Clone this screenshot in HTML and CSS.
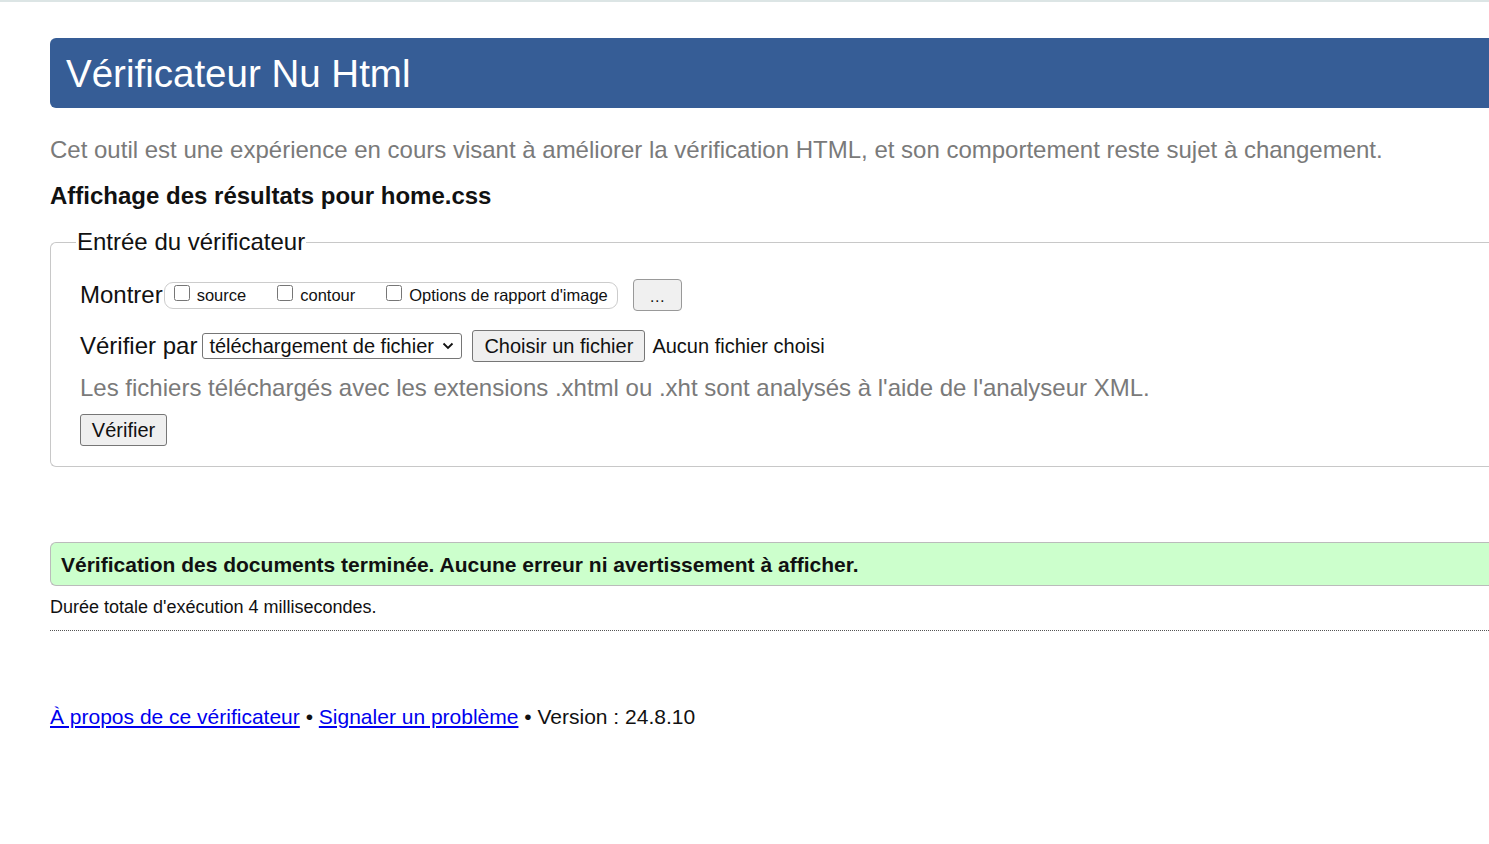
FILE: index.html
```html
<!DOCTYPE html>
<html lang="fr">
<head>
<meta charset="utf-8">
<title>Vérificateur Nu Html</title>
<link rel="stylesheet" href="styles.css">
</head>
<body>
<div class="topline"></div>
<div class="page">
  <h1 class="banner">Vérificateur Nu Html</h1>
  <p class="intro">Cet outil est une expérience en cours visant à améliorer la vérification HTML, et son comportement reste sujet à changement.</p>
  <h2 class="results-title">Affichage des résultats pour home.css</h2>
  <fieldset class="checker">
    <legend class="checker-legend">Entrée du vérificateur</legend>
    <div class="row row-show">
      <span class="row-label">Montrer</span>
      <span class="opts">
        <label class="opt"><input type="checkbox" class="cb">source</label>
        <label class="opt"><input type="checkbox" class="cb">contour</label>
        <label class="opt"><input type="checkbox" class="cb">Options de rapport d'image</label>
      </span>
      <button class="btn btn-more" type="button">…</button>
    </div>
    <div class="row row-by">
      <span class="row-label">Vérifier par</span>
      <span class="sel-wrap">
        <select class="sel"><option>téléchargement de fichier</option></select>
        <svg class="sel-arrow" width="12" height="8" viewBox="0 0 12 8"><path d="M1.5 1.5 L6 6 L10.5 1.5" fill="none" stroke="#111" stroke-width="1.8"/></svg>
      </span>
      <button class="btn btn-file" type="button">Choisir un fichier</button>
      <span class="nofile">Aucun fichier choisi</span>
    </div>
    <p class="hint">Les fichiers téléchargés avec les extensions .xhtml ou .xht sont analysés à l'aide de l'analyseur XML.</p>
    <button class="btn btn-check" type="button">Vérifier</button>
  </fieldset>
  <div class="success">Vérification des documents terminée. Aucune erreur ni avertissement à afficher.</div>
  <p class="elapsed">Durée totale d'exécution 4 millisecondes.</p>
  <p class="footer"><a href="#">À propos de ce vérificateur</a> • <a href="#">Signaler un problème</a> • Version : 24.8.10</p>
</div>
</body>
</html>
```
FILE: styles.css
```css
html, body {
  margin: 0;
  padding: 0;
  overflow: hidden;
  background: #fff;
}
body {
  font-family: "Liberation Sans", Arial, sans-serif;
  color: #111;
}
.topline {
  height: 2px;
  background: #dce5e5;
}
.page {
  padding-left: 50px;
  margin-right: -20px;
}
.banner {
  margin: 36px 0 0 0;
  height: 70px;
  line-height: 72px;
  background: #365d96;
  color: #fff;
  font-size: 38.5px;
  font-weight: normal;
  padding-left: 16px;
  border-radius: 6px 0 0 6px;
}
.intro {
  margin: 27px 0 0 0;
  font-size: 24px;
  line-height: 30px;
  color: #7a7a7a;
}
.results-title {
  margin: 16px 0 0 0;
  font-size: 24px;
  line-height: 30px;
  font-weight: bold;
  color: #111;
}
.checker {
  margin: 17px 0 0 0;
  padding: 22px 0 20px 29px;
  border: 1px solid #c8c8c8;
  border-right: none;
  border-radius: 6px 0 0 6px;
}
.checker-legend {
  font-size: 24px;
  line-height: 28px;
  padding: 0 1px;
  margin-left: -4px;
  color: #111;
}
.row {
  display: flex;
  align-items: center;
}
.row-label {
  font-size: 24px;
  color: #111;
}
.row-show {
  height: 34px;
}
.opts {
  display: flex;
  align-items: center;
  height: 25px;
  border: 1px solid #ccc;
  border-radius: 9px;
  padding: 0 9px 0 9px;
  margin-left: 1px;
}
.opt {
  display: flex;
  align-items: center;
  font-size: 16.5px;
  color: #111;
  margin-right: 31px;
}
.opt:last-child {
  margin-right: 0;
}
.cb {
  width: 16px;
  height: 16px;
  margin: 0 7px 4px 0;
}
.btn {
  font-family: "Liberation Sans", Arial, sans-serif;
  background: #efefef;
  border: 1px solid #767676;
  border-radius: 3px;
  color: #111;
  padding: 0;
}
.btn-more {
  margin-left: 15px;
  width: 49px;
  height: 32px;
  font-size: 16px;
  border-color: #999;
  border-radius: 4px;
  background: #f0f0f0;
  padding-top: 4px;
}
.row-by {
  margin-top: 17px;
  height: 34px;
}
.sel-wrap {
  position: relative;
  margin-left: 5px;
  display: flex;
}
.sel {
  -webkit-appearance: none;
  appearance: none;
  height: 26px;
  width: 260px;
  font-family: "Liberation Sans", Arial, sans-serif;
  font-size: 20px;
  border: 1px solid #767676;
  border-radius: 3px;
  background: #fff;
  color: #111;
  padding: 0 3px 0 6px;
}
.sel-arrow {
  position: absolute;
  right: 8px;
  top: 9px;
  pointer-events: none;
}
.btn-file {
  margin-left: 10px;
  width: 173px;
  height: 32px;
  font-size: 20px;
}
.nofile {
  margin-left: 7px;
  font-size: 20px;
  color: #111;
}
.hint {
  margin: 10px 0 0 0;
  font-size: 24px;
  line-height: 30px;
  color: #7a7a7a;
}
.btn-check {
  margin-top: 11px;
  width: 87px;
  height: 32px;
  font-size: 20px;
  display: block;
}
.success {
  margin-top: 75px;
  height: 42px;
  line-height: 44px;
  background: #ccffcc;
  border: 1px solid #bbb;
  border-right: none;
  border-radius: 6px 0 0 6px;
  padding-left: 10px;
  font-size: 21px;
  font-weight: bold;
  color: #111;
}
.elapsed {
  margin: 9px 0 0 0;
  font-size: 18px;
  line-height: 24px;
  padding-bottom: 11px;
  border-bottom: 1px dotted #555;
  color: #111;
}
.footer {
  margin: 71px 0 0 0;
  font-size: 21px;
  line-height: 30px;
  color: #111;
}
.footer a {
  color: #0000ee;
}
```
